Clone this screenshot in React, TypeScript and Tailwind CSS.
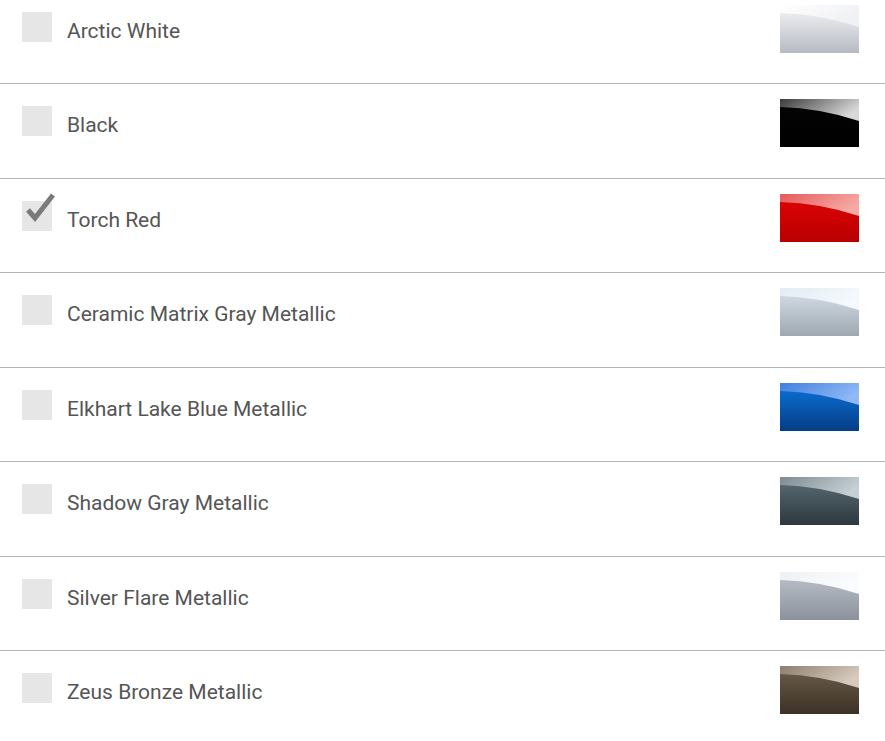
const colors = [
  { name: "Arctic White", top: "#f5f6f8", bottom: "#b7bac2", hiA: "#ffffff", hiB: "#f0f1f4", checked: false },
  { name: "Black", top: "#050505", bottom: "#000000", hiA: "#3a3a3a", hiB: "#d8d8d8", checked: false },
  { name: "Torch Red", top: "#e00303", bottom: "#b80000", hiA: "#e65a5a", hiB: "#f6a9a4", checked: true },
  { name: "Ceramic Matrix Gray Metallic", top: "#d9e2ea", bottom: "#9ea8b0", hiA: "#e4ecf2", hiB: "#f3f9fc", checked: false },
  { name: "Elkhart Lake Blue Metallic", top: "#0b74dc", bottom: "#053d85", hiA: "#3f7fe0", hiB: "#8fb8f5", checked: false },
  { name: "Shadow Gray Metallic", top: "#5c6e76", bottom: "#2d383e", hiA: "#7d8a90", hiB: "#c4d0d4", checked: false },
  { name: "Silver Flare Metallic", top: "#bcc3cb", bottom: "#8b929b", hiA: "#eef1f3", hiB: "#fbfcfd", checked: false },
  { name: "Zeus Bronze Metallic", top: "#6f5f4c", bottom: "#3b3125", hiA: "#8c7e6e", hiB: "#d6cbbd", checked: false },
];

function Swatch({ i, top, bottom, hiA, hiB }: { i: number; top: string; bottom: string; hiA: string; hiB: string }) {
  return (
    <svg width="79" height="48" viewBox="0 0 79 48" className="block">
      <defs>
        <linearGradient id={`b${i}`} x1="0" y1="0" x2="0" y2="1">
          <stop offset="0" stopColor={top} />
          <stop offset="1" stopColor={bottom} />
        </linearGradient>
        <linearGradient id={`h${i}`} x1="0" y1="0" x2="1" y2="0.4">
          <stop offset="0" stopColor={hiA} />
          <stop offset="1" stopColor={hiB} />
        </linearGradient>
      </defs>
      <rect width="79" height="48" fill={`url(#b${i})`} />
      <path d="M0 0 H79 V22 Q40 9 0 8 Z" fill={`url(#h${i})`} />
    </svg>
  );
}

export default function App() {
  return (
    <main className="h-[741px] w-[885px] overflow-hidden bg-white" style={{ fontFamily: "Roboto, 'Liberation Sans', sans-serif" }}>
      <div className="-mt-[10.5px]">
        {colors.map((c, i) => (
          <div key={c.name} className="box-border flex h-[94.5px] items-start border-b border-[#b5b5b5]">
            <div className="relative ml-[22px] mt-[22px] h-[30px] w-[30px] shrink-0 bg-[#e6e6e6]">
              {c.checked && (
                <svg className="absolute left-0 top-0 overflow-visible" width="30" height="30" viewBox="0 0 30 30">
                  <polyline points="6,9 13,17 31,-6" fill="none" stroke="#7a7a7a" strokeWidth="5" />
                </svg>
              )}
            </div>
            <span className="ml-[15px] mt-[29px] text-[21px] leading-[24px] text-[#555555]">{c.name}</span>
            <div className="ml-auto mr-[26px] mt-[15px]">
              <Swatch i={i} top={c.top} bottom={c.bottom} hiA={c.hiA} hiB={c.hiB} />
            </div>
          </div>
        ))}
      </div>
    </main>
  );
}
